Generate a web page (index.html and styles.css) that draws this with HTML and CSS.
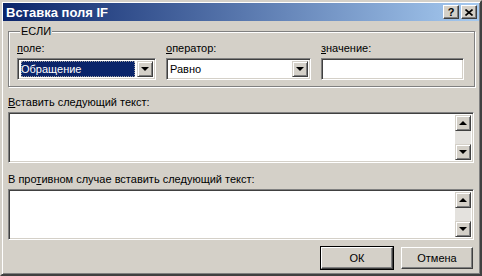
FILE: index.html
```html
<!DOCTYPE html>
<html lang="ru">
<head>
    <meta charset="UTF-8">
    <title>Вставка поля IF</title>
    <link rel="stylesheet" href="styles.css">
</head>
<body>
    <div class="window">
        <div class="titlebar">
            <span class="title">Вставка поля IF</span>
            <div class="caption-buttons">
                <span class="cap-btn help">?</span>
                <span class="cap-btn close">
                    <svg width="8" height="7" viewBox="0 0 8 7"><path d="M0.5 0.5 L7.5 6.5 M7.5 0.5 L0.5 6.5" stroke="#000" stroke-width="1.6"/></svg>
                </span>
            </div>
        </div>

        <div class="content">
            <fieldset class="group">
                <legend>ЕСЛИ</legend>
                <div class="fields">
                    <div class="field">
                        <label><u>п</u>оле:</label>
                        <div class="combo">
                            <div class="combo-value"><span class="selected">Обращение</span></div>
                            <span class="drop-btn"><i class="arrow-down"></i></span>
                        </div>
                    </div>
                    <div class="field">
                        <label><u>о</u>ператор:</label>
                        <div class="combo">
                            <div class="combo-value">Равно</div>
                            <span class="drop-btn"><i class="arrow-down"></i></span>
                        </div>
                    </div>
                    <div class="field">
                        <label><u>з</u>начение:</label>
                        <div class="edit"></div>
                    </div>
                </div>
            </fieldset>

            <label class="memo-label"><u>В</u>ставить следующий текст:</label>
            <div class="memo">
                <div class="memo-text"></div>
                <div class="scrollbar">
                    <span class="scroll-btn"><i class="arrow-up"></i></span>
                    <span class="track"></span>
                    <span class="scroll-btn"><i class="arrow-down"></i></span>
                </div>
            </div>

            <label class="memo-label second">В про<u>т</u>ивном случае вставить следующий текст:</label>
            <div class="memo">
                <div class="memo-text"></div>
                <div class="scrollbar">
                    <span class="scroll-btn"><i class="arrow-up"></i></span>
                    <span class="track"></span>
                    <span class="scroll-btn"><i class="arrow-down"></i></span>
                </div>
            </div>

            <div class="actions">
                <button class="btn default">ОК</button>
                <button class="btn">Отмена</button>
            </div>
        </div>
    </div>
</body>
</html>
```

FILE: styles.css
```css
html, body {
    margin: 0;
    padding: 0;
    background-color: #d4d0c8;
    font-family: "Liberation Sans", Arial, sans-serif;
    font-size: 11px;
    color: #000000;
}

.window {
    width: 482px;
    height: 276px;
    box-sizing: border-box;
    padding: 1px;
    border: 2px solid;
    border-color: #d4d0c8 #404040 #404040 #d4d0c8;
    box-shadow: inset 1px 1px 0 #ffffff, inset -1px -1px 0 #808080;
    background-color: #d4d0c8;
    display: flex;
    flex-direction: column;
}

.titlebar {
    height: 18px;
    background: linear-gradient(to right, #0a246a, #a6caf0);
    display: flex;
    align-items: center;
    justify-content: space-between;
    padding: 0 2px 0 3px;
}

.title {
    color: #ffffff;
    font-weight: bold;
    font-size: 13px;
}

.caption-buttons {
    display: flex;
    gap: 2px;
}

.cap-btn {
    width: 16px;
    height: 14px;
    box-sizing: border-box;
    background-color: #d4d0c8;
    border: 1px solid;
    border-color: #ffffff #404040 #404040 #ffffff;
    box-shadow: inset -1px -1px 0 #808080;
    display: flex;
    align-items: center;
    justify-content: center;
}

.help {
    font-weight: bold;
    font-size: 11px;
    line-height: 11px;
}

.content {
    flex: 1;
    padding: 3px 5px 0 5px;
    display: flex;
    flex-direction: column;
}

.group {
    margin: 0;
    padding: 3px 10px 6px 8px;
    border: 1px solid #808080;
    box-shadow: inset 1px 1px 0 #ffffff, 1px 1px 0 #ffffff;
}

.group legend {
    padding: 0 1px;
    margin-left: 3px;
    line-height: 14px;
    background-color: #d4d0c8;
}

.fields {
    display: grid;
    grid-template-columns: 139px 145px 143px;
    column-gap: 10px;
}

.field label {
    display: block;
    line-height: 14px;
    margin-bottom: 3px;
}

.combo, .edit, .memo {
    box-sizing: border-box;
    background-color: #ffffff;
    border: 1px solid;
    border-color: #808080 #ffffff #ffffff #808080;
    box-shadow: inset 1px 1px 0 #404040, inset -1px -1px 0 #d4d0c8;
}

.combo {
    height: 22px;
    display: flex;
    padding: 2px;
}

.edit {
    height: 22px;
}

.combo-value {
    flex: 1;
    padding-left: 1px;
    display: flex;
    align-items: center;
}

.selected {
    flex: 1;
    background-color: #0a246a;
    color: #ffffff;
    line-height: 16px;
    outline: 1px dotted #a0a0a0;
    outline-offset: -1px;
    margin-right: 2px;
}

.drop-btn, .scroll-btn {
    width: 16px;
    box-sizing: border-box;
    background-color: #d4d0c8;
    border: 1px solid;
    border-color: #d4d0c8 #404040 #404040 #d4d0c8;
    box-shadow: inset 1px 1px 0 #ffffff, inset -1px -1px 0 #808080;
    display: flex;
    align-items: center;
    justify-content: center;
}

.arrow-down, .arrow-up {
    width: 0;
    height: 0;
    border-left: 4px solid transparent;
    border-right: 4px solid transparent;
}

.arrow-down {
    border-top: 4px solid #000000;
}

.arrow-up {
    border-bottom: 4px solid #000000;
}

.memo-label {
    display: block;
    line-height: 14px;
    margin: 8px 0 3px;
}

.memo-label.second {
    margin-top: 9px;
}

.memo {
    height: 51px;
    display: flex;
    padding: 2px;
}

.memo-text {
    flex: 1;
}

.scrollbar {
    width: 16px;
    display: flex;
    flex-direction: column;
}

.scroll-btn {
    height: 16px;
}

.track {
    flex: 1;
    background-color: #e4e2de;
}

.actions {
    display: flex;
    justify-content: flex-end;
    gap: 8px;
    margin-top: 7px;
    padding-right: 1px;
}

.btn {
    width: 72px;
    height: 22px;
    font-family: inherit;
    font-size: 11px;
    background-color: #d4d0c8;
    border: 1px solid;
    border-color: #ffffff #404040 #404040 #ffffff;
    box-shadow: inset -1px -1px 0 #808080;
    padding: 0;
}

.btn.default {
    outline: 1px solid #000000;
    outline-offset: 0;
}
```
